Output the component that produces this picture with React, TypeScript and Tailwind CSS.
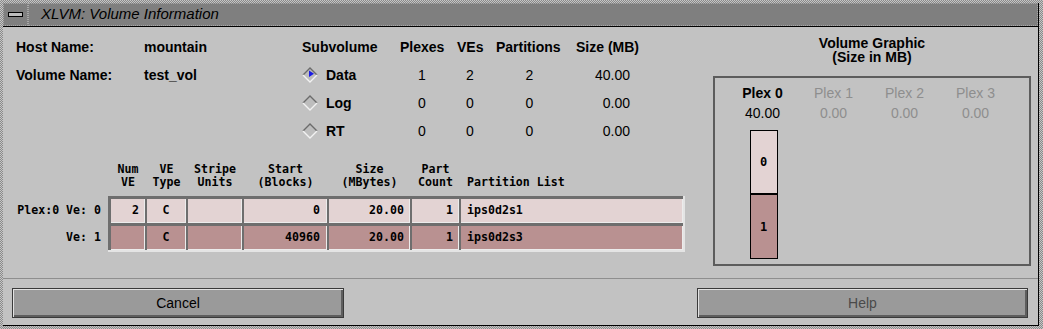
import React from 'react';

const subvolumes = [
  { name: 'Data', plexes: '1', ves: '2', parts: '2', size: '40.00', on: true },
  { name: 'Log', plexes: '0', ves: '0', parts: '0', size: '0.00', on: false },
  { name: 'RT', plexes: '0', ves: '0', parts: '0', size: '0.00', on: false },
];

const headers = [
  ['Num', 'VE'],
  ['VE', 'Type'],
  ['Stripe', 'Units'],
  ['Start', '(Blocks)'],
  ['Size', '(MBytes)'],
  ['Part', 'Count'],
  ['', 'Partition List'],
];

const veRows = [
  { label: 'Plex:0 Ve: 0', num: '2', type: 'C', stripe: '', start: '0', size: '20.00', count: '1', parts: 'ips0d2s1', bg: 'bg-[#e3d3d3]' },
  { label: 'Ve: 1', num: '', type: 'C', stripe: '', start: '40960', size: '20.00', count: '1', parts: 'ips0d2s3', bg: 'bg-[#b99191]' },
];

const plexes = [
  { name: 'Plex 0', size: '40.00', active: true },
  { name: 'Plex 1', size: '0.00', active: false },
  { name: 'Plex 2', size: '0.00', active: false },
  { name: 'Plex 3', size: '0.00', active: false },
];

const Diamond = ({ on }: { on: boolean }) => (
  <svg width="16" height="16" viewBox="0 0 16 16">
    <polygon points="8,1 15,8 8,15 1,8" fill="#bdbdbd" />
    <polyline points="1,8 8,1 15,8" fill="none" stroke="#6b6b6b" strokeWidth="1.4" />
    <polyline points="1,8 8,15 15,8" fill="none" stroke="#f2f2f2" strokeWidth="1.4" />
    {on && <polygon points="7,3.5 12,6.8 7,10" fill="#1a1ae6" />}
  </svg>
);

const cols = 'grid grid-cols-[34px_39px_54px_83px_81px_47px_222px] gap-x-[2px]';

export default function App() {
  return (
    <div className="w-[1043px] h-[329px] pt-[3px] pl-[3px] pr-[4px] pb-[3px] bg-[repeating-conic-gradient(#8a8a8a_0_25%,#c6c6c6_0_50%)] bg-size-[2px_2px] font-['Liberation_Sans',Arial,sans-serif] text-black overflow-hidden">
      <div className="h-full flex flex-col bg-[#c2c2c2] border-r border-b border-black">
        {/* title bar */}
        <div className="flex h-[24px] border-b border-black bg-[#7f7f7f]">
          <div className="w-[25px] flex items-center justify-center border border-dotted border-[#a8a8a8]">
            <div className="w-[15px] h-[5px] border border-black bg-[#bcbcbc]" />
          </div>
          <div className="flex-1 flex items-center pl-[12px] border border-dotted border-[#a8a8a8] text-[15px] italic text-black">
            XLVM: Volume Information
          </div>
        </div>

        {/* main */}
        <div className="flex h-[251px]">
          <div className="w-[710px] flex flex-col">
            <div className="flex pt-[6px] pl-[13px]">
              <div className="w-[286px] grid grid-cols-[128px_auto] auto-rows-[28px] items-center text-[14px] font-bold">
                <div>Host Name:</div>
                <div>mountain</div>
                <div>Volume Name:</div>
                <div>test_vol</div>
              </div>
              <div className="grid grid-cols-[85px_44px_26px_67px_65px] gap-x-[13px] auto-rows-[28px] items-center text-[14px]">
                <div className="font-bold">Subvolume</div>
                <div className="font-bold">Plexes</div>
                <div className="font-bold">VEs</div>
                <div className="font-bold">Partitions</div>
                <div className="font-bold">Size (MB)</div>
                {subvolumes.map((s) => (
                  <React.Fragment key={s.name}>
                    <div className="flex items-center gap-[8px] font-bold">
                      <Diamond on={s.on} />
                      {s.name}
                    </div>
                    <div className="text-center">{s.plexes}</div>
                    <div className="text-center">{s.ves}</div>
                    <div className="text-center">{s.parts}</div>
                    <div className="text-right pr-[11px]">{s.size}</div>
                  </React.Fragment>
                ))}
              </div>
            </div>

            {/* VE table */}
            <div className="mt-[18px] font-['DejaVu_Sans_Mono','Liberation_Mono',monospace] font-bold text-[11.6px]">
              <div className={`${cols} ml-[108px] mb-[7px] leading-[13px]`}>
                {headers.map((h, i) => (
                  <div key={i} className={`flex flex-col justify-end ${i === 6 ? 'pl-[6px] text-left' : 'text-center'}`}>
                    <div>{h[0] || '\u00a0'}</div>
                    <div>{h[1]}</div>
                  </div>
                ))}
              </div>
              <div className="flex">
                <div className="w-[98px] mr-[7px] pt-[3px] flex flex-col gap-y-[3px]">
                  {veRows.map((r) => (
                    <div key={r.label} className="h-[24px] flex items-center justify-end whitespace-pre">
                      {r.label}
                    </div>
                  ))}
                </div>
                <div className="bg-[#6e6e6e] pt-[3px] pl-[3px] border-r-2 border-b-2 border-[#e4e4e4]">
                  <div className={`${cols} gap-y-[3px]`}>
                    {veRows.map((r) => {
                      const cell = `h-[24px] flex items-center border-r border-b border-[#ececec] ${r.bg}`;
                      return (
                        <React.Fragment key={r.label}>
                          <div className={`${cell} justify-end pr-[5px]`}>{r.num}</div>
                          <div className={`${cell} justify-center`}>{r.type}</div>
                          <div className={`${cell}`}>{r.stripe}</div>
                          <div className={`${cell} justify-end pr-[6px]`}>{r.start}</div>
                          <div className={`${cell} justify-end pr-[5px]`}>{r.size}</div>
                          <div className={`${cell} justify-end pr-[5px]`}>{r.count}</div>
                          <div className={`${cell} pl-[6px]`}>{r.parts}</div>
                        </React.Fragment>
                      );
                    })}
                  </div>
                </div>
              </div>
            </div>
          </div>

          {/* volume graphic */}
          <div className="w-[318px] flex flex-col pt-[9px]">
            <div className="text-center text-[14px] font-bold leading-[14px]">
              <div>Volume Graphic</div>
              <div>(Size in MB)</div>
            </div>
            <div className="mt-[12px] h-[190px] border-2 border-[#5c5c5c] pl-[12px] pt-[5px] flex">
              {plexes.map((p) => (
                <div key={p.name} className="w-[71px] flex flex-col items-center">
                  <div className={`h-[20px] leading-[20px] text-[14px] ${p.active ? 'font-bold' : 'text-[#8e8e8e]'}`}>{p.name}</div>
                  <div className={`h-[20px] leading-[20px] text-[14px] ${p.active ? '' : 'text-[#8e8e8e]'}`}>{p.size}</div>
                  {p.active && (
                    <div className="mt-[7px] ml-[2px] w-[28px] border border-black flex flex-col font-['DejaVu_Sans_Mono','Liberation_Mono',monospace] font-bold text-[12px]">
                      <div className="h-[64px] bg-[#e3d3d3] border-b-2 border-black flex items-center justify-center">0</div>
                      <div className="h-[63px] bg-[#b99191] flex items-center justify-center">1</div>
                    </div>
                  )}
                </div>
              ))}
            </div>
          </div>
        </div>

        {/* separator + buttons */}
        <div className="h-px bg-[#8e8e8e]" />
        <div className="flex justify-between pt-[9px] pl-[9px] pr-[10px]">
          <button className="w-[332px] h-[30px] bg-[#9a9a9a] border border-[#3a3a3a] shadow-[inset_1px_1px_0_#e2e2e2,inset_-2px_-2px_0_#5e5e5e] text-[14px] text-black">
            Cancel
          </button>
          <button className="w-[331px] h-[30px] bg-[#9a9a9a] border border-[#3a3a3a] shadow-[inset_1px_1px_0_#e2e2e2,inset_-2px_-2px_0_#5e5e5e] text-[14px] text-[#4a4a4a]">
            Help
          </button>
        </div>
      </div>
    </div>
  );
}
